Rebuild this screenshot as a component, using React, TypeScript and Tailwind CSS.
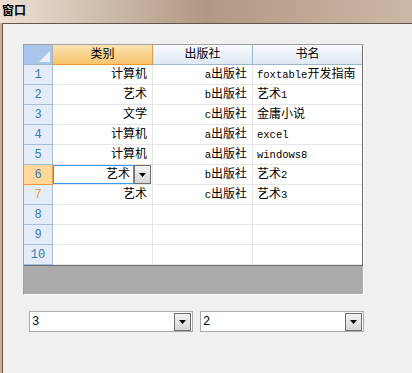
import React from 'react'

type Row = { cat: string; pub: string; name: string }

const rows: Row[] = [
  { cat: '计算机', pub: 'a出版社', name: 'foxtable开发指南' },
  { cat: '艺术', pub: 'b出版社', name: '艺术1' },
  { cat: '文学', pub: 'c出版社', name: '金庸小说' },
  { cat: '计算机', pub: 'a出版社', name: 'excel' },
  { cat: '计算机', pub: 'a出版社', name: 'windows8' },
  { cat: '艺术', pub: 'b出版社', name: '艺术2' },
  { cat: '艺术', pub: 'c出版社', name: '艺术3' },
  { cat: '', pub: '', name: '' },
  { cat: '', pub: '', name: '' },
  { cat: '', pub: '', name: '' },
]

const font = "font-['Liberation_Mono','Noto_Sans_CJK_SC',monospace]"

// latin runs are narrower in the original bitmap font, so shrink them a bit
const Mixed: React.FC<{ text: string }> = ({ text }) => (
  <>
    {text.split(/([A-Za-z0-9]+)/).map((part, i) =>
      /^[A-Za-z0-9]+$/.test(part) ? (
        <span key={i} className="text-[10.5px]">
          {part}
        </span>
      ) : (
        <span key={i}>{part}</span>
      )
    )}
  </>
)

const DropButton: React.FC<{ className?: string }> = ({ className = '' }) => (
  <div
    className={`flex items-end justify-center pb-[5px] border border-[#6f6f6f] bg-gradient-to-b from-[#f4f4f4] to-[#d6d6d6] ${className}`}
  >
    <svg width="9" height="5" viewBox="0 0 9 5">
      <polygon points="1,0 8,0 4.5,4" fill="#000" />
    </svg>
  </div>
)

const Combo: React.FC<{ value: string }> = ({ value }) => (
  <div className="flex items-center w-[164px] h-[21px] border border-[#a9a9a9] bg-white">
    <span className={`flex-1 pl-[2px] text-[12px] leading-none text-black ${font}`}>{value}</span>
    <DropButton className="w-[17px] h-[18px] mr-[1px]" />
  </div>
)

export default function App() {
  return (
    <div className={`w-[412px] h-[373px] overflow-hidden bg-[#f0f0f0] flex flex-col ${font}`}>
      {/* title bar */}
      <div className="h-[23px] shrink-0 flex items-center pl-[2px] bg-gradient-to-r from-[#ede1d4] via-[#b09984] to-[#ccb8a6]">
        <span className="text-[12px] font-bold text-black leading-none">窗口</span>
      </div>

      <div className="flex flex-1">
        <div className="w-[2px] bg-[#cdb093]" />
        <div className="flex-1 border-l border-t border-[#64554a] pl-[20px] pt-[20px]">
          {/* grid */}
          <div className="w-[341px] border border-t-[#a0a0a0] border-l-[#a0a0a0] border-r-white border-b-white bg-[#ababab]">
            <div className="w-[339px] border-r border-b border-[#6d6d6d] bg-white text-[12px] leading-none text-black">
              {/* header */}
              <div className="flex h-[20px]">
                <div className="w-[29px] h-[20px] bg-[#a9c5ec] border-r border-b border-[#9eb6ce] flex items-end justify-end p-[2px]">
                  <svg width="11" height="11" viewBox="0 0 11 11">
                    <polygon points="11,0 11,11 0,11" fill="#f0f4fa" />
                  </svg>
                </div>
                <div className="w-[100px] h-[20px] pt-[1px] flex items-center justify-center bg-gradient-to-b from-[#fbe3b2] to-[#f6c46c] border-r border-b border-[#f0963a]">
                  类别
                </div>
                <div className="w-[100px] h-[20px] pt-[1px] flex items-center justify-center bg-gradient-to-b from-[#f8fafd] to-[#dfe8f4] border-r border-b border-[#9eb6ce]">
                  出版社
                </div>
                <div className="w-[109px] h-[20px] pt-[1px] flex items-center justify-center bg-gradient-to-b from-[#f8fafd] to-[#dfe8f4] border-b border-[#9eb6ce]">
                  书名
                </div>
              </div>

              {rows.map((r, i) => {
                const n = i + 1
                const sel = n === 6
                return (
                  <div key={n} className="flex h-[20px]">
                    <div
                      className={`w-[29px] h-[20px] pt-[1px] flex items-center justify-center border-r border-b ${
                        sel ? 'bg-[#fdd898] border-[#f19a3b] text-[#3c78b8]' : 'bg-[#e4ecf7] border-[#a7bdd6]'
                      } ${n === 7 ? 'text-[#f2a21e]' : sel ? '' : 'text-[#3c78b8]'}`}
                    >
                      {n}
                    </div>
                    {sel ? (
                      <div className="w-[100px] h-[20px] flex border-r border-b border-[#e6e6e6]">
                        <div className="flex-1 h-[19px] pt-[1px] border border-[#3399ff] flex items-center justify-end pr-[3px]">
                          {r.cat}
                        </div>
                        <DropButton className="w-[17px] h-[19px] mr-[1px]" />
                      </div>
                    ) : (
                      <div className="w-[100px] h-[20px] pt-[1px] flex items-center justify-end pr-[5px] border-r border-b border-[#e6e6e6]">
                        {r.cat}
                      </div>
                    )}
                    <div className="w-[100px] h-[20px] pt-[1px] flex items-center justify-end pr-[5px] border-r border-b border-[#e6e6e6]">
                      <Mixed text={r.pub} />
                    </div>
                    <div className="w-[109px] h-[20px] pt-[1px] flex items-center pl-[4px] border-b border-[#e6e6e6] whitespace-nowrap overflow-hidden">
                      <Mixed text={r.name} />
                    </div>
                  </div>
                )
              })}
            </div>
            <div className="h-[28px]" />
          </div>

          {/* combos */}
          <div className="flex gap-[7px] mt-[16px] ml-[6px]">
            <Combo value="3" />
            <Combo value="2" />
          </div>
        </div>
      </div>
    </div>
  )
}
